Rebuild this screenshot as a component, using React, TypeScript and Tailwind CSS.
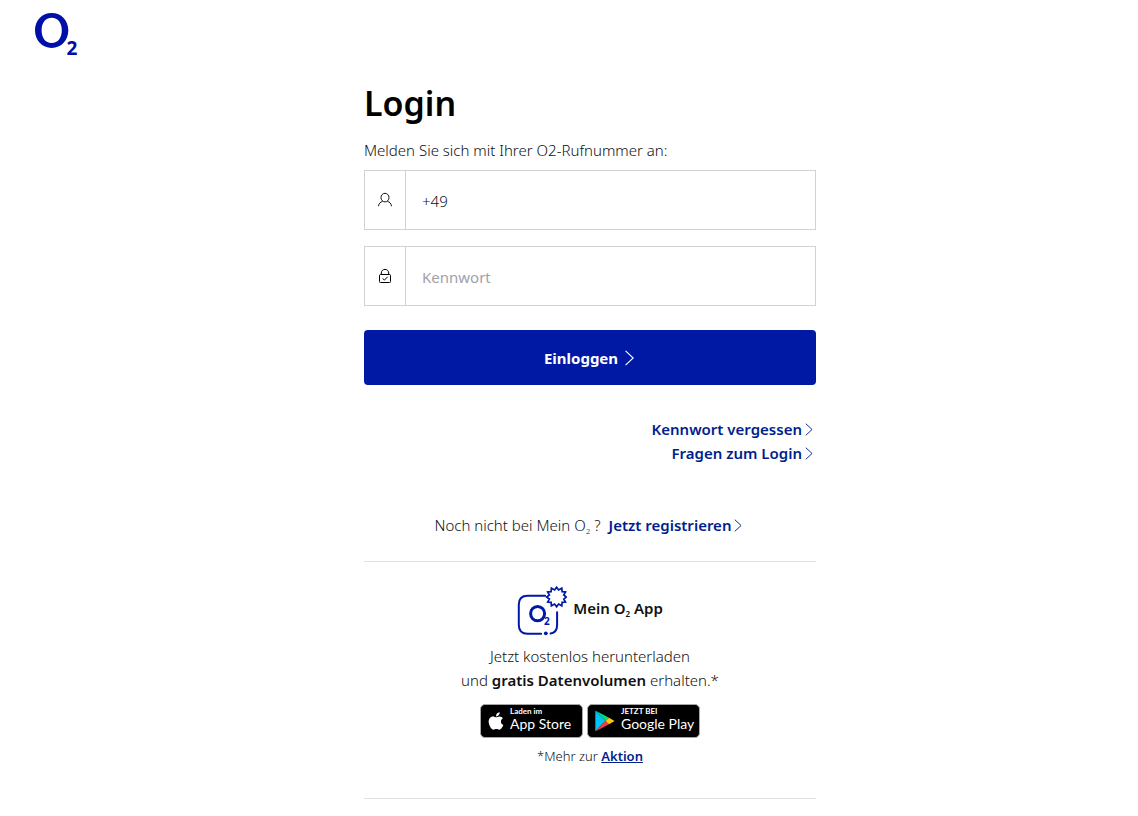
import type { ReactNode } from "react";
import { FaApple } from "react-icons/fa";

function Logo() {
  return (
    <svg width="48" height="48" viewBox="-1 0 48 48" role="img" aria-label="O2">
      <path
        fillRule="evenodd"
        fill="#000fa8"
        d="M16.7 0.9C26.4 0.9 33.3 8.3 33.3 18.3S26.4 35.9 16.7 35.9S0 28.3 0 18.3S7 0.9 16.7 0.9ZM16.7 5.7C10.3 5.7 6.6 11 6.6 18.3S10.3 31.1 16.7 31.1S26.8 25.6 26.8 18.3S23.1 5.7 16.7 5.7Z"
      />
      <text x="31.5" y="42.5" fontSize="19" fontWeight="700" fill="#000fa8" className="font-['Noto_Sans',sans-serif]">
        2
      </text>
    </svg>
  );
}

function Chevron({ className }: { className: string }) {
  return (
    <svg viewBox="0 0 8 14" fill="none" stroke="currentColor" className={className} aria-hidden="true">
      <path d="M0.5 0.7L7.3 7L0.5 13.3" />
    </svg>
  );
}

function UserIcon() {
  return (
    <svg width="16" height="16" viewBox="0 0 16 16" fill="none" stroke="#111" aria-hidden="true">
      <ellipse cx="8" cy="5.6" rx="4" ry="4.3" />
      <path d="M1.5 14.2C1.7 11.6 3.3 10.1 5.6 9.3M14.5 14.2C14.3 11.6 12.7 10.1 10.4 9.3" />
    </svg>
  );
}

function LockIcon() {
  return (
    <svg width="16" height="16" viewBox="0 0 16 16" fill="none" stroke="#000" aria-hidden="true">
      <rect x="2.5" y="6.5" width="11" height="8" rx="1" />
      <path d="M4.3 6.5V5C4.3 2.9 5.8 1.4 8 1.4S11.7 2.9 11.7 5V6.5M5.6 10.4L7.4 12.1L10.6 8.8" />
    </svg>
  );
}

function AppIcon() {
  return (
    <svg width="50" height="50" viewBox="-0.6 0 50 50" fill="none" stroke="#0019a5" aria-hidden="true">
      <path strokeWidth="2" strokeLinecap="round" d="M27.5 9.8H10Q1.2 9.8 1.2 18.6V39Q1.2 47.8 10 47.8H23.5M33 47.6Q39.5 46.5 39.5 39V26.2" />
      <circle cx="28.2" cy="47.3" r="1.9" fill="#0019a5" stroke="none" />
      <path
        strokeWidth="1.7"
        strokeLinejoin="miter"
        d="M39 1.2L41 4L44.2 2.2L44.5 5.6L47.9 5.9L46.2 9L48.7 11L46.2 13.1L47.9 16.1L44.5 16.4L44.2 19.8L41 18L39 20.8L37 18L33.8 19.8L33.5 16.4L30.1 16.1L31.8 13.1L29 11L31.8 9L30.1 5.9L33.5 5.6L33.8 2.2L37 4Z"
      />
      <ellipse cx="20" cy="27.6" rx="7" ry="7.2" strokeWidth="3" />
      <text x="26.4" y="39" fontSize="10" fontWeight="700" fill="#0019a5" stroke="none" className="font-['Noto_Sans',sans-serif]">
        2
      </text>
    </svg>
  );
}

function PlayIcon() {
  return (
    <svg width="20" height="22" viewBox="0 0 20 22" className="shrink-0" aria-hidden="true">
      <path fill="#00c3f5" d="M0.3 0.8V21.2L10.5 11Z" />
      <path fill="#00dd77" d="M0.3 0.6L14 7.7L10.5 11Z" />
      <path fill="#f23b4e" d="M0.3 21.4L14 14.3L10.5 11Z" />
      <path fill="#ffc90a" d="M14 7.7L19.6 11L14 14.3L10.5 11Z" />
    </svg>
  );
}

function Field({ id, icon, label, type, placeholder, value }: { id: string; icon: ReactNode; label?: string; type: string; placeholder?: string; value?: string }) {
  return (
    <div className="flex h-[60px] border border-[#d2d2d2]">
      <span className="flex w-[41px] shrink-0 items-center justify-center border-r border-[#d2d2d2]">{icon}</span>
      <input
        id={id}
        type={type}
        aria-label={label}
        placeholder={placeholder}
        defaultValue={value}
        className="min-w-0 flex-1 px-4 pt-0.5 font-light text-[#111] outline-none placeholder:font-normal placeholder:text-[#a3a1ab]"
      />
    </div>
  );
}

function Sub() {
  return <sub className="bottom-[-3px] text-[8px]">2</sub>;
}

function ArrowLink({ children }: { children: ReactNode }) {
  return (
    <a href="#" className="inline-flex items-center gap-[3px] font-semibold text-[#001e8c]">
      {children}
      <Chevron className="mr-[3px] h-[13px] w-2" />
    </a>
  );
}

function StoreBadge({ icon, caption, name }: { icon: ReactNode; caption: string; name: string }) {
  return (
    <a href="#" className="flex h-[34px] items-center gap-1.5 rounded-[5px] border border-[#a6a6a6] bg-black pl-[7px] text-left whitespace-nowrap text-white">
      {icon}
      <span className="flex flex-col pb-1 font-['Lato',sans-serif]">
        <span className="text-[8px] leading-[10px] font-bold">{caption}</span>
        <span className="text-[14px] leading-4">{name}</span>
      </span>
    </a>
  );
}

export default function App() {
  return (
    <div className="bg-white pl-[42px] font-['Noto_Sans',sans-serif] text-[15px] leading-6 text-[#111]">
      <header className="-ml-2 h-14 pt-3">
        <a href="#" className="inline-block align-top">
          <Logo />
        </a>
      </header>
      <main className="mx-auto max-w-[452px] pt-6">
        <h1 className="text-[34px] leading-[46px] font-semibold text-black">Login</h1>
        <form className="pt-3">
          <label htmlFor="phone" className="mb-2 block font-light">
            Melden Sie sich mit Ihrer O2-Rufnummer an:
          </label>
          <div className="grid gap-4">
            <Field id="phone" icon={<UserIcon />} type="tel" value="+49" />
            <Field id="password" icon={<LockIcon />} label="Kennwort" type="password" placeholder="Kennwort" />
          </div>
          <button type="button" className="mt-6 flex h-[55px] w-full items-center justify-center gap-[7px] rounded-[4px] bg-[#0019a5] pr-[2px] font-bold text-white">
            Einloggen
            <Chevron className="h-4 w-[9px]" />
          </button>
        </form>
        <div className="mt-8 flex flex-col items-end">
          <ArrowLink>Kennwort vergessen</ArrowLink>
          <ArrowLink>Fragen zum Login</ArrowLink>
        </div>
        <div className="mt-12 flex items-center justify-center gap-2 border-b border-[#e3e3e3] pb-6">
          <span className="font-light">
            Noch nicht bei Mein O<Sub /> ?
          </span>
          <ArrowLink>Jetzt registrieren</ArrowLink>
        </div>
        <section className="flex flex-col items-center border-b border-[#e3e3e3] pt-6 pb-8 text-center">
          <div className="flex gap-1.5">
            <AppIcon />
            <h2 className="pt-2.5 font-semibold">
              Mein O<Sub /> App
            </h2>
          </div>
          <p className="mt-2 font-light">
            Jetzt kostenlos herunterladen
            <br />
            und <b className="font-semibold">gratis Datenvolumen</b> erhalten.*
          </p>
          <div className="mt-3 grid grid-cols-[103px_113px] gap-1">
            <StoreBadge icon={<FaApple className="h-5 w-4" aria-hidden="true" />} caption="Laden im" name="App Store" />
            <StoreBadge icon={<PlayIcon />} caption="JETZT BEI" name="Google Play" />
          </div>
          <p className="mt-2 text-[13px] leading-5 font-light">
            *Mehr zur{" "}
            <a href="#" className="font-semibold text-[#001e8c] underline">
              Aktion
            </a>
          </p>
        </section>
      </main>
    </div>
  );
}
